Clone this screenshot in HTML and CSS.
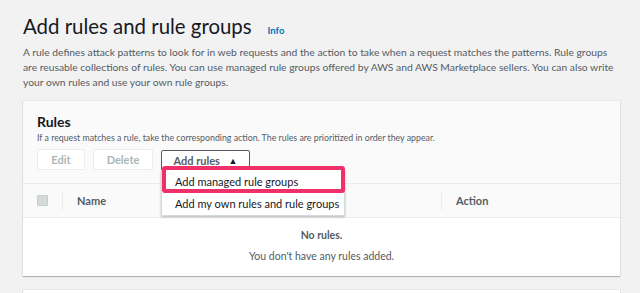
FILE: index.html
```html
<!DOCTYPE html>
<html lang="en">
<head>
    <meta charset="UTF-8">
    <title>Add rules and rule groups</title>
    <link rel="stylesheet" href="styles.css">
</head>
<body>
    <div class="page">
        <div class="page-header">
            <h1>Add rules and rule groups</h1>
            <a class="info" href="#">Info</a>
        </div>
        <p class="intro">A rule defines attack patterns to look for in web requests and the action to take when a request matches the patterns. Rule groups are reusable collections of rules. You can use managed rule groups offered by AWS and AWS Marketplace sellers. You can also write your own rules and use your own rule groups.</p>

        <div class="card">
            <div class="card-header">
                <h2>Rules</h2>
                <p class="card-desc">If a request matches a rule, take the corresponding action. The rules are prioritized in order they appear.</p>
                <div class="actions">
                    <button class="btn btn-edit" disabled>Edit</button>
                    <button class="btn btn-delete" disabled>Delete</button>
                    <div class="dropdown">
                        <button class="btn btn-open">Add rules <span class="caret">&#9650;</span></button>
                        <ul class="menu">
                            <li class="menu-item highlight">Add managed rule groups</li>
                            <li class="menu-item">Add my own rules and rule groups</li>
                        </ul>
                    </div>
                </div>
            </div>
            <div class="table-head">
                <div class="col col-check"><span class="checkbox"></span></div>
                <div class="col col-name">Name</div>
                <div class="col col-action">Action</div>
            </div>
            <div class="empty">
                <div class="empty-title">No rules.</div>
                <div class="empty-text">You don't have any rules added.</div>
            </div>
        </div>

        <div class="card card-next"></div>
    </div>
</body>
</html>
```

FILE: styles.css
```css
body {
    margin: 0;
    background: #f2f2f2;
    font-family: 'Lato', 'Open Sans', sans-serif;
    color: #16191f;
}

.page {
    padding: 12px 20px 0 23px;
}

.page-header {
    display: flex;
    align-items: baseline;
    gap: 16px;
}

.page-header h1 {
    margin: 0;
    font-size: 20.4px;
    font-weight: 400;
    line-height: 28px;
    color: #16191f;
}

.info {
    font-size: 9.5px;
    font-weight: 700;
    color: #0073bb;
    text-decoration: none;
}

.intro {
    margin: 5px 0 11px;
    font-size: 10.3px;
    line-height: 15px;
    color: #545b64;
}

.card {
    background: #fff;
    box-shadow: 0 1px 1px rgba(0, 31, 63, 0.25), 0 0 0 1px rgba(0, 0, 0, 0.04);
}

.card-header {
    background: #fafafa;
    padding: 11px 14px 12px;
}

.card-header h2 {
    margin: 0;
    font-size: 14px;
    font-weight: 700;
    line-height: 20px;
}

.card-desc {
    margin: 0 0 5px;
    font-size: 8.8px;
    line-height: 12px;
    color: #545b64;
}

.actions {
    display: flex;
    gap: 8px;
}

.btn {
    font-family: inherit;
    font-size: 11px;
    font-weight: 700;
    height: 21px;
    padding: 0;
    background: #fff;
    border: 1px solid #eaeded;
    border-radius: 2px;
    color: #aab7b8;
}

.btn-edit {
    width: 48px;
}

.btn-delete {
    width: 60px;
}

.btn-open {
    width: 89px;
    border-color: #545b64;
    color: #545b64;
}

.caret {
    font-size: 9px;
    margin-left: 6px;
    vertical-align: 1px;
    color: #16191f;
}

.dropdown {
    position: relative;
}

.menu {
    position: absolute;
    top: 21px;
    left: 0;
    width: 182px;
    margin: 0;
    padding: 0;
    list-style: none;
    background: #fff;
    border: 1px solid #d5dbdb;
    border-top: none;
    box-shadow: 0 1px 2px rgba(0, 28, 36, 0.3);
    z-index: 2;
}

.menu-item {
    font-size: 11px;
    line-height: 22px;
    padding: 0 13px;
    color: #16191f;
    white-space: nowrap;
}

.menu-item.highlight {
    position: relative;
    line-height: 23px;
}

.menu-item.highlight::after {
    content: '';
    position: absolute;
    left: 0;
    right: -1px;
    top: -4px;
    bottom: 0;
    border: 4px solid #ef3069;
    border-radius: 3px;
}

.table-head {
    display: flex;
    align-items: center;
    height: 33px;
    background: #fafafa;
    border-top: 1px solid #eaeded;
    border-bottom: 1px solid #eaeded;
    font-size: 11px;
    font-weight: 700;
    color: #545b64;
}

.col {
    display: flex;
    align-items: center;
    height: 18px;
}

.col-check {
    width: 25px;
    padding-left: 14px;
    border-right: 1px solid #eaeded;
}

.checkbox {
    width: 9px;
    height: 9px;
    background: #d5dbdb;
    border: 1px solid #c6cccc;
    border-radius: 1px;
}

.col-name {
    width: 364px;
    padding-left: 14px;
    border-right: 1px solid #eaeded;
}

.col-action {
    padding-left: 14px;
}

.empty {
    text-align: center;
    padding: 8px 0 11px;
    color: #545b64;
}

.empty-title {
    font-size: 10.5px;
    font-weight: 700;
    line-height: 18px;
}

.empty-text {
    margin-top: 3px;
    font-size: 10.5px;
    line-height: 18px;
}

.card-next {
    margin-top: 14px;
    height: 20px;
}
```
